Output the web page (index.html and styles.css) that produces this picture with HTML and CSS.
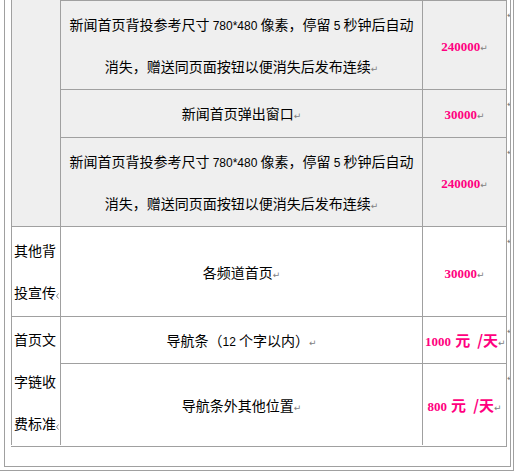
FILE: index.html
```html
<!DOCTYPE html>
<html lang="zh-CN">
<head>
<meta charset="utf-8">
<title>广告价目</title>
<link rel="stylesheet" href="styles.css">
</head>
<body>
<div class="frame-outer">
  <div class="frame-inner">
    <table class="rates">
      <colgroup>
        <col class="c-cat">
        <col class="c-desc">
        <col class="c-price">
      </colgroup>
      <tbody>
        <tr class="shaded">
          <td class="cat cat-cont" rowspan="3"></td>
          <td class="desc">新闻首页背投参考尺寸 <span class="lat">780*480</span> 像素，停留 <span class="lat">5</span> 秒钟后自动<br>消失，赠送同页面按钮以便消失后发布连续<span class="pm">↵</span></td>
          <td class="price"><b>240000</b><span class="pm">↵</span></td>
        </tr>
        <tr class="shaded">
          <td class="desc pad-b">新闻首页弹出窗口<span class="pm">↵</span></td>
          <td class="price pad-b"><b>30000</b><span class="pm">↵</span></td>
        </tr>
        <tr class="shaded">
          <td class="desc">新闻首页背投参考尺寸 <span class="lat">780*480</span> 像素，停留 <span class="lat">5</span> 秒钟后自动<br>消失，赠送同页面按钮以便消失后发布连续<span class="pm">↵</span></td>
          <td class="price"><b>240000</b><span class="pm">↵</span></td>
        </tr>
        <tr>
          <td class="cat pad-b">其他背投宣传<svg class="cut-mark" width="3" height="6" viewBox="0 0 3 6" aria-hidden="true"><path d="M2.5 0.5 L0.5 3 L2.5 5.5" fill="none" stroke="#8a8a8a" stroke-width="1"/></svg></td>
          <td class="desc">各频道首页<span class="pm">↵</span></td>
          <td class="price"><b>30000</b><span class="pm">↵</span></td>
        </tr>
        <tr class="row-nav">
          <td class="cat cat-tall" rowspan="2">首页文字链收费标准<svg class="cut-mark" width="3" height="6" viewBox="0 0 3 6" aria-hidden="true"><path d="M2.5 0.5 L0.5 3 L2.5 5.5" fill="none" stroke="#8a8a8a" stroke-width="1"/></svg></td>
          <td class="desc">导航条（<span class="lat">12</span> 个字以内）<span class="pm">↵</span></td>
          <td class="price"><b>1000</b> <span class="unit">元</span> <span class="unit per">/天</span><span class="pm">↵</span></td>
        </tr>
        <tr class="row-other">
          <td class="desc">导航条外其他位置<span class="pm">↵</span></td>
          <td class="price"><b>800</b> <span class="unit">元</span> <span class="unit per">/天</span><span class="pm">↵</span></td>
        </tr>
      </tbody>
    </table>
  </div>
</div>
</body>
</html>
```

FILE: styles.css
```css
* {
  box-sizing: border-box;
}

html,
body {
  margin: 0;
  background: #ffffff;
}

body {
  font-family: "Noto Sans CJK SC", sans-serif;
  font-size: 14px;
  color: #000000;
  overflow: hidden;
}

.frame-outer {
  width: 515px;
  margin-left: -1px;
  border: 1px solid #a0a0a0;
  border-top: none;
  padding: 0 2px 3px 4px;
}

.frame-inner {
  border: 1px solid #a0a0a0;
  border-top: none;
  padding: 0 3px 19px 6px;
  overflow: hidden;
}

.rates {
  width: 496px;
  table-layout: fixed;
  border-collapse: separate;
  border-spacing: 0;
  border-right: 1px solid #a0a0a0;
  border-bottom: 1px solid #a0a0a0;
  padding: 0 0 1px 0;
}

.c-cat {
  width: 49px;
}

.c-desc {
  width: 362px;
}

.c-price {
  width: 84px;
}

.rates td {
  border-left: 1px solid #a0a0a0;
  border-top: 1px solid #a0a0a0;
  padding: 2px;
  line-height: 42px;
  vertical-align: middle;
  font-family: "Noto Sans CJK SC", sans-serif;
  font-size: 14px;
}

.row-nav {
  height: 47px;
}

.row-other {
  height: 82px;
}

.shaded td,
.cat-cont {
  background: #efefef;
}

.rates td.cat-cont {
  border-top: none;
}

.rates td.pad-b {
  padding-bottom: 3px;
}

.cat {
  text-align: left;
}

.rates td.cat-tall {
  padding: 1px 2px;
}

.cut-mark {
  display: inline-block;
  width: 3px;
  height: 6px;
  margin-right: -3px;
  vertical-align: -1px;
}

.desc {
  text-align: center;
}

.lat {
  font-family: "Liberation Sans", sans-serif;
  font-size: 12px;
  line-height: 1;
}

.price {
  position: relative;
  text-align: center;
  white-space: nowrap;
  color: #ff0080;
}

.price b {
  font-family: "Liberation Serif", serif;
  font-size: 13px;
  font-weight: bold;
  line-height: 1;
}

.price .unit {
  font-family: "Noto Sans CJK SC", sans-serif;
  font-size: 15px;
  font-weight: bold;
  line-height: 1;
  margin-left: 1px;
}

.price .per {
  margin-left: 4px;
}

.price::after {
  content: "↵";
  position: absolute;
  left: calc(100% + 1px);
  top: 8px;
  font-family: "DejaVu Sans", sans-serif;
  font-size: 9px;
  line-height: 12px;
  color: #808080;
}

.pm {
  font-family: "DejaVu Sans", sans-serif;
  font-size: 9px;
  font-weight: normal;
  line-height: 1;
  color: #808080;
}
```
